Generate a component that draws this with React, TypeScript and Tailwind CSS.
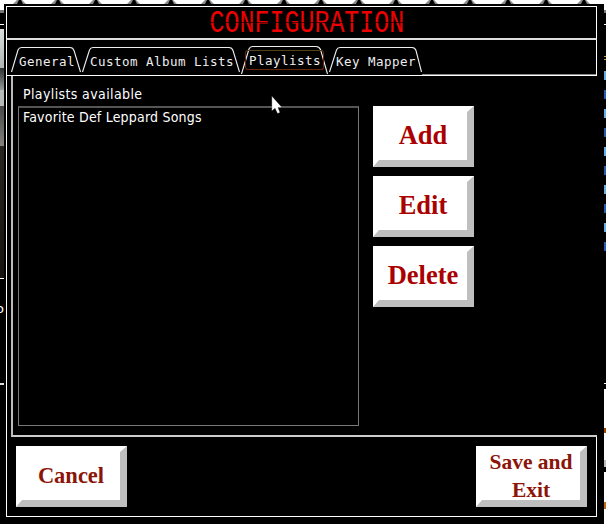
import type { ReactNode } from 'react';

const TOP_PINS = [20, 58, 96, 134, 171, 208, 246, 284, 321, 359, 396, 432, 470, 508, 546, 584];

function Backdrop() {
  return (
    <div className="absolute inset-0 flex flex-col bg-black">
      <svg className="block h-1 w-full shrink-0" viewBox="0 0 606 4">
        <rect width="606" height="4" fill="#fff" />
        {TOP_PINS.map((x) => (
          <g key={x}>
            <path d={`M${x - 3} 0H${x + 2}L${x + 6} 4H${x - 7}Z`} fill="#8b8b8b" />
            <path d={`M${x - 1} 0H${x + 1}L${x + 3} 4H${x - 3}Z`} fill="#000" />
          </g>
        ))}
      </svg>
      <div className="flex flex-1 justify-between">
        <div className="flex w-1 flex-col overflow-hidden">
          <div className="h-[6px] bg-white" />
          <div className="h-[3px] bg-[#777]" />
          <div className="h-[11px]" />
          <div className="h-px bg-white" />
          <div className="h-[4px]" />
          <div className="h-[39px] bg-gradient-to-b from-[#d9deda] to-[#aeb4b0]" />
          <div className="h-[22px] bg-gradient-to-b from-[#303431] to-[#969c98]" />
          <div className="h-[16px] bg-[#b5bab6]" />
          <div className="h-[40px] bg-gradient-to-b from-[#484846] to-[#85827f]" />
          <div className="h-[132px] bg-gradient-to-b from-[#282420] to-[#171310]" />
          <div className="h-px bg-white" />
          <div className="flex h-[104px] items-center justify-end">
            <span className="relative top-[-23px] font-['DejaVu_Sans'] text-[13px] leading-none text-white">o</span>
          </div>
          <div className="h-[2px] bg-[#ddd]" />
        </div>
        <div className="flex w-0.5 flex-col">
          <div className="h-[6px] bg-white" />
          <div className="h-[3px] bg-[#777]" />
          <div className="h-[11px]" />
          <div className="h-px bg-white" />
          <div className="h-[31px]" />
          <div className="h-px bg-[#d59a37]" />
          <div className="h-[2px]" />
          <div className="h-px bg-[#d59a37]" />
          <div className="h-[11px]" />
          {Array.from({ length: 10 }, (_, i) => (
            <div key={i} className={`mb-[10px] h-[9px] ${i % 2 ? 'bg-[#255caf]' : 'bg-[#62aee8]'}`} />
          ))}
          <div className="mt-[122px] h-px bg-white" />
          <div className="h-[5px]" />
          <div className="h-[39px] bg-white" />
          <div className="h-[5px] bg-[#a64700]" />
          <div className="h-[27px] bg-white" />
          <div className="h-[7px] bg-[#bcbcbc]" />
          <div className="h-[5px]" />
          <div className="h-[30px] bg-white" />
          <div className="h-[7px] bg-[#c46a1c]" />
          <div className="flex-1 bg-white" />
        </div>
      </div>
    </div>
  );
}

function BevelButton({ className, children }: { className: string; children: ReactNode }) {
  return (
    <button
      className={`box-border flex h-[61px] items-center justify-center border-r-[7px] border-b-[7px] border-t-[6px] border-l-[6px] border-t-white border-l-white border-r-[#bfbfbf] border-b-[#bfbfbf] bg-white text-center font-['Liberation_Serif',serif] font-bold whitespace-nowrap ${className}`}
    >
      {children}
    </button>
  );
}

interface TabProps {
  label: string;
  width: string;
  path: string;
  text: string;
  active?: boolean;
}

function Tab({ label, width, path, text, active }: TabProps) {
  return (
    <button className={`relative h-[30px] shrink-0 text-left ${width}`}>
      <svg className="absolute inset-0 h-full w-full overflow-visible" fill="none" stroke="#eee" strokeWidth="1.1">
        <path d={path} />
      </svg>
      {active && <span className="absolute top-[5px] left-[4px] h-[20px] w-[79px] rounded-[3px] border border-[#6b2608] border-t-[#554019]" />}
      <span className={`relative block font-['DejaVu_Sans_Mono',monospace] text-[12.5px] leading-[15px] tracking-[0.475px] whitespace-nowrap text-[#eee] ${text}`}>
        {label}
      </span>
    </button>
  );
}

const TABS: TabProps[] = [
  { label: 'General', width: 'w-[71px]', path: 'M.5 27L7 5Q8 2.5 10.5 2.5H59Q62 2.5 63 5.5L69.5 27', text: 'pl-2 pt-0.5' },
  { label: 'Custom Album Lists', width: 'w-[159px]', path: 'M.5 27L7.5 5Q8.5 2.5 11 2.5H147Q150 2.5 151 5.5L157.5 27', text: 'pl-2 pt-0.5' },
  { label: 'Playlists', width: 'w-[88px]', path: 'M.5 29L8 4Q9 1.5 11.5 1.5H75Q78 1.5 79.5 4.5L86.5 29', text: 'pl-2 pt-px', active: true },
  { label: 'Key Mapper', width: 'w-[93px]', path: 'M.5 27L7.5 5Q8.5 2.5 11 2.5H83Q86 2.5 87 5.5L92.5 27', text: 'pl-[7px] pt-0.5' },
];

export default function App() {
  return (
    <div className="relative h-[524px] w-[606px] overflow-hidden bg-black">
      <Backdrop />

      <section className="absolute top-1 left-1 h-[520px] w-[600px] bg-black pt-0.5 pl-0.5">
        <div className="flex h-[511px] w-[591px] flex-col">
          <header className="relative flex h-[34px] shrink-0 items-center justify-center border border-b-2 border-white border-b-[#ddd]">
            <h1 className="relative top-px left-[5px] scale-x-[0.805] font-['Liberation_Mono',monospace] text-[31px] leading-[31px] whitespace-nowrap text-[#ee0000]">
              CONFIGURATION
            </h1>
            <span className="absolute top-[15px] left-[200px] h-px w-[200px] bg-black/60" />
          </header>

          <nav className="flex h-[36px] shrink-0 items-start border-r border-b border-l border-white pt-[5px] pl-1">
            {TABS.map((tab) => (
              <Tab key={tab.label} {...tab} />
            ))}
            <span className="mt-[29px] h-px flex-1 bg-[#888]" />
          </nav>

          <main className="flex h-[361px] shrink-0 border-l border-white pl-1">
            <div className="flex flex-1 border-b-2 border-l-2 border-b-[#ccc] border-l-[#bbb] pl-[5px]">
              <div className="w-[341px]">
                <h2 className="h-[30px] pt-[8px] pl-[5px] font-['DejaVu_Sans_Condensed','DejaVu_Sans',sans-serif] text-[14px] leading-[20px] tracking-[0.38px] whitespace-nowrap text-white">
                  Playlists available
                </h2>
                <ul className="h-[320px] border border-t-2 border-[#777] border-t-[#555] pl-1 font-['DejaVu_Sans_Condensed','DejaVu_Sans',sans-serif] text-[14px] leading-[18px] tracking-[0.2px] whitespace-nowrap text-white">
                  <li>Favorite Def Leppard Songs</li>
                </ul>
              </div>
              <div className="ml-[14px] flex flex-col gap-[9px] pt-[30px] text-[26.5px] text-[#aa0000]">
                <BevelButton className="w-[101px]">Add</BevelButton>
                <BevelButton className="w-[101px]">Edit</BevelButton>
                <BevelButton className="w-[101px]">Delete</BevelButton>
              </div>
            </div>
          </main>

          <footer className="flex flex-1 justify-between border-r border-b border-l border-white pt-[9px] pr-[9px] pl-[9px] text-[#8b1508]">
            <BevelButton className="w-[111px] text-[22.5px]">Cancel</BevelButton>
            <BevelButton className="w-[111px] text-[21.5px] leading-[28px]">
              Save and
              <br />
              Exit
            </BevelButton>
          </footer>
        </div>
      </section>

      <svg className="absolute top-[95px] left-[271px] h-5 w-3" viewBox="0 0 12 20">
        <path d="M.8 1V16L4 13.200L6.500 18.500L9 17.500L7 12.500H11Z" fill="#fff" stroke="#000" strokeWidth=".3" />
      </svg>
    </div>
  );
}
